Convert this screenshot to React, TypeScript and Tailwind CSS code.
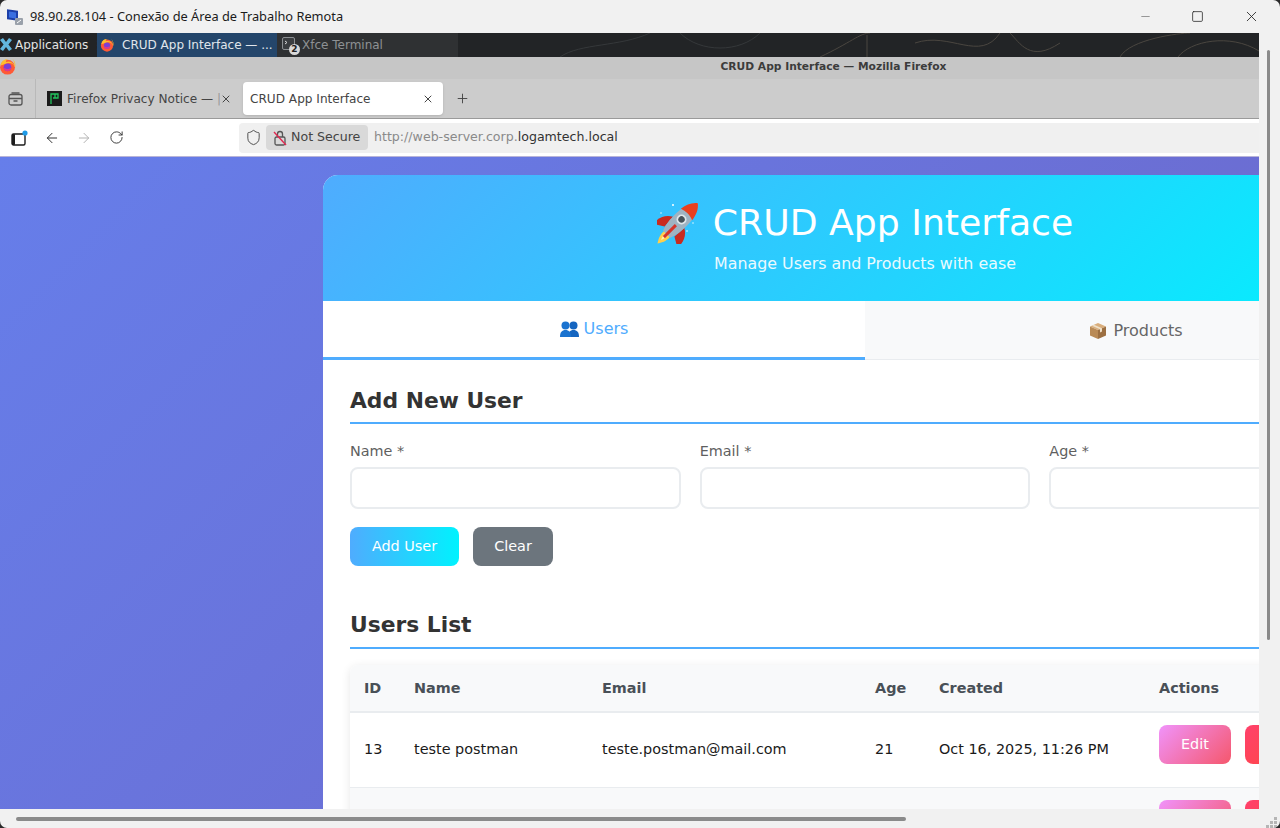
import { ArrowLeft, ArrowRight, Minus, Plus, RotateCw, Shield, Square, X } from "lucide-react";

const FirefoxLogo = ({ size = 16 }: { size?: number }) => (
  <svg width={size} height={size} viewBox="0 0 16 16" className="shrink-0">
    <circle cx="8" cy="8.6" r="7" fill="#ff5a36" />
    <path d="M1.5 7 C2 3 5 1 8 1.2 C6.8 2 6.4 3 6.6 3.8 C9 2.6 13 3.4 14.6 7.4 C15 5 14 2.4 12.4 .8 C15.4 3 16 6.6 15 9 C14.4 6 11 4 8 5 Z" fill="#ffbd2e" />
    <circle cx="8" cy="8.8" r="3.6" fill="#7b3fd6" />
    <path d="M4.4 8.8 A3.6 3.6 0 0 0 11.6 8.8 C10 11 6 11 4.4 8.8 Z" fill="#e0388c" />
  </svg>
);

const RemoteDesktopIcon = () => (
  <svg width="18" height="18" viewBox="0 0 18 18" className="shrink-0">
    <rect x="1" y="1" width="11" height="10" fill="#1c3fa8" transform="skewY(8)" />
    <rect x="3" y="3" width="7" height="6" fill="#3a6fe0" transform="skewY(8)" />
    <rect x="9" y="10" width="8" height="7" rx="1" fill="#9aa1aa" />
    <path d="M11 15 L15 12" stroke="#fff" strokeWidth="1" />
  </svg>
);

const XfceIcon = () => (
  <svg width="12" height="13" viewBox="0 0 12 13" className="shrink-0">
    <path d="M0 2 L3 0 L6 4 L9 0 L12 2 L8.4 6.5 L12 11 L9 13 L6 9 L3 13 L0 11 L3.6 6.5 Z" fill="#62b6dd" />
  </svg>
);

const TerminalIcon = () => (
  <div className="relative w-[16px] h-[16px] shrink-0">
    <svg width="13" height="13" viewBox="0 0 13 13">
      <rect x=".5" y=".5" width="12" height="12" rx="1.5" fill="#3a3d40" stroke="#8b8f92" />
      <path d="M3 4 L5 5.5 L3 7" stroke="#d8d8d8" fill="none" />
    </svg>
    <span className="absolute right-[-2px] bottom-[-2px] w-[11px] h-[11px] rounded-full bg-[#d8d8d8] text-[#222] text-[9px] leading-[11px] text-center font-bold">
      2
    </span>
  </div>
);

const WindowsTabIcon = () => (
  <svg width="15" height="14" viewBox="0 0 15 14" className="shrink-0">
    <rect x="1" y="2.5" width="13" height="10.5" rx="2" fill="none" stroke="#555" strokeWidth="1.3" />
    <path d="M1 6.5 H14" stroke="#555" strokeWidth="1.3" />
    <path d="M3.5 1 H11.5" stroke="#555" strokeWidth="1.3" />
    <path d="M5.5 9 H9.5" stroke="#555" strokeWidth="1.3" />
  </svg>
);

const SidebarIcon = () => (
  <svg width="17" height="16" viewBox="0 0 17 16" className="shrink-0">
    <rect x="1" y="4" width="13" height="11" rx="1.5" fill="none" stroke="#1d1d1d" strokeWidth="1.4" />
    <rect x="1" y="4" width="3" height="11" rx="1" fill="#1d1d1d" />
    <circle cx="14" cy="3" r="2.6" fill="#1e9be8" />
  </svg>
);

const PrivacyFavicon = () => (
  <div className="w-[15px] h-[15px] bg-[#1b1b1b] shrink-0 flex items-center justify-center">
    <svg width="9" height="11" viewBox="0 0 9 11">
      <path d="M1 11 V1 H8 V5 H3 M5 1 V5" stroke="#22c55e" strokeWidth="1.3" fill="none" />
    </svg>
  </div>
);

const InsecureLock = () => (
  <svg width="14" height="16" viewBox="0 0 14 16" className="shrink-0">
    <rect x="2" y="7" width="10" height="8" rx="1.5" fill="none" stroke="#555" strokeWidth="1.3" />
    <path d="M4.5 7 V4 A2.5 2.5 0 0 1 9.5 4 V7" fill="none" stroke="#555" strokeWidth="1.3" />
    <path d="M1 2 L13 15" stroke="#e22850" strokeWidth="1.4" />
  </svg>
);

const RocketEmoji = () => (
  <svg width="43" height="42" viewBox="1 0 43 42" className="shrink-0">
    <circle cx="17" cy="3" r="1" fill="#fff" />
    <circle cx="5" cy="11" r=".7" fill="#fff" />
    <circle cx="37" cy="21" r=".7" fill="#fff" />
    <circle cx="31" cy="29" r=".8" fill="#fff" />
    <g transform="rotate(45 22 21)">
      <path d="M18 36 H26 C27 42 24 47 22 50 C20 47 17 42 18 36 Z" fill="#ffcf4a" />
      <path d="M20 36 H24 C24 40 23 43 22 45 C21 43 20 40 20 36 Z" fill="#fff3b0" />
      <path d="M14 20 C7 24 4 31 5 39 L15 33 Z" fill="#c92b20" />
      <path d="M30 20 C37 24 40 31 39 39 L29 33 Z" fill="#c92b20" />
      <path d="M22 -7 C29 0 31 12 30 22 C30 29 28 34 27 37 H17 C16 34 14 29 14 22 C13 12 15 0 22 -7 Z" fill="#9fb3c2" />
      <path d="M22 -7 C27 -3 29 2 30 9 C25 7 19 7 14 9 C15 2 17 -3 22 -7 Z" fill="#e8401f" />
      <path d="M20.5 24 H23.5 V41 H20.5 Z" fill="#d6342a" />
      <circle cx="22" cy="16" r="5" fill="#dfe6ea" />
      <circle cx="22" cy="16" r="3.2" fill="#47525a" />
    </g>
  </svg>
);

const PeopleEmoji = () => (
  <svg width="19" height="16" viewBox="0 0 19 16" className="shrink-0">
    <circle cx="13.5" cy="4.5" r="4" fill="#1565c0" />
    <path d="M8 16 C8 11 10 9 13.5 9 C17 9 19 11 19 16 Z" fill="#1565c0" />
    <circle cx="5.5" cy="4.5" r="4" fill="#1a73d0" />
    <path d="M0 16 C0 11 2 9 5.5 9 C9 9 11 11 11 16 Z" fill="#1a73d0" />
  </svg>
);

const PackageEmoji = () => (
  <svg width="18" height="18" viewBox="0 0 18 18" className="shrink-0">
    <path d="M9 1 L17 4.5 L9 8 L1 4.5 Z" fill="#d9ae7c" />
    <path d="M1 4.5 L9 8 V17 L1 13.5 Z" fill="#b98a55" />
    <path d="M17 4.5 L9 8 V17 L17 13.5 Z" fill="#9c6f41" />
    <path d="M5 2.8 L13 6.3 V9.5 L11 10.4 V7.2 L3 3.7 Z" fill="#efe0c8" />
  </svg>
);

const ResizeGrip = () => (
  <svg width="14" height="12" viewBox="0 0 14 12" fill="#b5b5b5">
    <rect x="10" y="0" width="3" height="3" />
    <rect x="6" y="4" width="3" height="3" />
    <rect x="10" y="4" width="3" height="3" />
    <rect x="2" y="8" width="3" height="3" />
    <rect x="6" y="8" width="3" height="3" />
    <rect x="10" y="8" width="3" height="3" />
  </svg>
);

const users = [
  { key: "row-13", id: "13", name: "teste postman", email: "teste.postman@mail.com", age: "21", created: "Oct 16, 2025, 11:26 PM" },
  { key: "row-next", id: "", name: "", email: "", age: "", created: "" },
];

const Field = ({ label }: { label: string }) => (
  <div>
    <label className="block mb-[5px] text-[14.4px] leading-[22px] text-[#5f5f5f]">{label}</label>
    <input className="block w-full h-[42px] rounded-[8px] border-2 border-[#e9ecef] bg-white" />
  </div>
);

const SectionTitle = ({ children }: { children: string }) => (
  <h2 className="text-[21.8px] leading-[27px] font-bold text-[#333] pb-[8px] border-b-2 border-[#4facfe]">
    {children}
  </h2>
);

export default function App() {
  return (
    <div className="w-[1280px] h-[828px] overflow-hidden bg-[#2a2a2a]">
      <div className="h-full flex flex-col rounded-[7px] overflow-hidden bg-[#f1f1f1]">
        {/* RDP title bar */}
        <div className="h-[33px] shrink-0 flex items-center pl-[6px] font-['Noto_Sans',sans-serif] text-[12.8px] text-[#1b1b1b]">
          <RemoteDesktopIcon />
          <span className="ml-[6px]">98.90.28.104 - Conexão de Área de Trabalho Remota</span>
          <div className="ml-auto flex items-center text-[#222]">
            <Minus size={13} strokeWidth={1.2} className="mr-[39px] text-[#666]" />
            <Square size={13} strokeWidth={1.4} className="mr-[39px]" />
            <X size={17} strokeWidth={1.2} className="mr-[20px]" />
          </div>
        </div>

        <div className="flex-1 min-h-0 flex">
          <div className="w-[1259px] shrink-0 overflow-hidden flex flex-col font-['DejaVu_Sans',sans-serif]">
            {/* XFCE panel */}
            <div className="h-[24px] shrink-0 bg-[#222426] flex items-center text-[12px] overflow-hidden relative">
              <svg width="1259" height="24" className="absolute left-0 top-0" fill="none" stroke="#4a4640" strokeWidth="1">
                <path d="M820 24 C850 10 860 0 870 0 M867 24 V2 M915 10 C950 -2 980 30 1000 0 M1010 0 C1020 10 1030 30 1060 10 M1120 24 C1130 6 1180 0 1190 0 M1178 24 C1190 8 1230 0 1259 18" />
                <path d="M560 24 C580 10 620 14 650 0 M680 0 C700 20 740 20 760 0" stroke="#35383a" />
              </svg>
              <div className="relative flex items-center h-full pb-[1px]">
                <XfceIcon />
                <span className="ml-[3px] text-[#e4e4e4] w-[82px] whitespace-nowrap">
                  Applications <span className="text-[#999]">⋮</span>
                </span>
                <div className="w-[180px] h-[24px] bg-[#24466b] flex items-center pl-[3px] text-[#e0e6ec]">
                  <FirefoxLogo size={14} />
                  <span className="ml-[8px] whitespace-nowrap">CRUD App Interface — ...</span>
                </div>
                <div className="w-[181px] h-[24px] bg-[#2f3133] flex items-center pl-[5px] text-[#8e9194]">
                  <TerminalIcon />
                  <span className="ml-[4px]">Xfce Terminal</span>
                </div>
              </div>
            </div>

            {/* Firefox title bar */}
            <div className="h-[22px] shrink-0 bg-[#c6c6c6] flex items-center relative">
              <div className="ml-[-1px] mb-[3px]">
                <FirefoxLogo size={17} />
              </div>
              <span className="w-full text-center font-bold text-[10.7px] leading-[20px] pb-[2px] text-[#3c3c3c] pl-[392px]">
                CRUD App Interface — Mozilla Firefox
              </span>
            </div>

            {/* Tab strip */}
            <div className="h-[40px] shrink-0 bg-[#cccccc] border-b border-[#9a9a9a] flex items-center text-[12.1px] text-[#444]">
              <div className="w-[36px] h-full flex items-center pl-[8px] border-r border-[#b9b9b9]">
                <WindowsTabIcon />
              </div>
              <div className="w-[207px] flex items-center pl-[11px] whitespace-nowrap pt-[1px]">
                <PrivacyFavicon />
                <span className="ml-[5px] w-[153px] overflow-hidden">
                  Firefox Privacy Notice — <span className="text-[#999]">|</span>
                </span>
                <X size={12} strokeWidth={2} />
              </div>
              <div className="w-[200px] h-[33px] bg-white rounded-[4px] shadow-sm flex items-center pl-[7px] pr-[9px]">
                <span className="pt-[1px]">CRUD App Interface</span>
                <X size={12} strokeWidth={2} className="ml-auto" />
              </div>
              <Plus size={15} strokeWidth={1.5} className="ml-[12px]" />
            </div>

            {/* Nav bar */}
            <div className="h-[37px] shrink-0 bg-white flex items-center text-[12.6px]">
              <div className="w-[239px] flex items-center pl-[11px] text-[#333]">
                <SidebarIcon />
                <ArrowLeft size={16} strokeWidth={1.5} className="ml-[16px]" />
                <ArrowRight size={16} strokeWidth={1.5} className="ml-[16px] text-[#b3b3b3]" />
                <RotateCw size={15} strokeWidth={1.5} className="ml-[17px]" />
              </div>
              <div className="flex-1 h-[30px] bg-[#f0f0f0] rounded-l-[4px] flex items-center pl-[6px]">
                <Shield size={17} strokeWidth={1.3} className="text-[#444]" />
                <div className="ml-[4px] h-[25px] w-[102px] bg-[#d9d9d9] rounded-[4px] flex items-center pl-[7px] text-[#444] whitespace-nowrap">
                  <InsecureLock />
                  <span className="ml-[4px]">Not Secure</span>
                </div>
                <span className="ml-[6px] text-[#8a8a8a]">
                  http://web-server.corp.<span className="text-[#333]">logamtech.local</span>
                </span>
              </div>
            </div>

            {/* Page */}
            <div className="flex-1 min-h-0 overflow-hidden border-t border-[#b8b4d8] bg-[linear-gradient(135deg,#667eea_0%,#764ba2_100%)] bg-[length:2560px_1400px] pt-[18px] pl-[323px]">
              <div className="w-[1084px] rounded-t-[15px] bg-white overflow-hidden">
                <header className="h-[126px] bg-[linear-gradient(135deg,#4facfe_0%,#00f2fe_100%)] text-white text-center pt-[26px]">
                  <h1 className="flex items-center justify-center gap-[13px] text-[36.2px] leading-[44px]">
                    <RocketEmoji />
                    <span>CRUD App Interface</span>
                  </h1>
                  <p className="mt-[9px] text-[15.85px] leading-[20px] opacity-90">Manage Users and Products with ease</p>
                </header>

                <div className="h-[59px] flex text-[16px]">
                  <button className="w-1/2 flex items-center justify-center gap-[5px] border-b-[3px] border-[#4facfe] text-[#4facfe] bg-white">
                    <PeopleEmoji />
                    Users
                  </button>
                  <button className="w-1/2 flex items-center justify-center gap-[6px] border-b border-[#e9ecef] bg-[#f8f9fa] text-[#666] pt-[2px]">
                    <PackageEmoji />
                    Products
                  </button>
                </div>

                <div className="px-[27px] pt-[27px]">
                  <SectionTitle>Add New User</SectionTitle>
                  <div className="mt-[16px] grid grid-cols-3 gap-[19px]">
                    <Field label="Name *" />
                    <Field label="Email *" />
                    <Field label="Age *" />
                  </div>
                  <div className="mt-[18px] flex gap-[14px] text-[14.4px] text-white">
                    <button className="w-[109px] h-[39px] rounded-[8px] bg-[linear-gradient(90deg,#4facfe_0%,#00f2fe_100%)]">
                      Add User
                    </button>
                    <button className="w-[80px] h-[39px] rounded-[8px] bg-[#6c757d]">Clear</button>
                  </div>

                  <div className="mt-[45px]">
                    <h2 className="text-[21.8px] leading-[27px] font-bold text-[#333] pb-[9px] border-b-2 border-[#4facfe]">
                      Users List
                    </h2>
                  </div>

                  <div className="mt-[16px] rounded-t-[8px] shadow-[0_2px_10px_rgba(0,0,0,0.1)] overflow-hidden">
                    <table className="w-full table-fixed border-collapse text-left text-[14.4px]">
                      <colgroup>
                        <col className="w-[50px]" />
                        <col className="w-[188px]" />
                        <col className="w-[273px]" />
                        <col className="w-[64px]" />
                        <col className="w-[220px]" />
                        <col />
                      </colgroup>
                      <thead>
                        <tr className="h-[47px] bg-[#f8f9fa] border-b-2 border-[#e9ecef] text-[#495057]">
                          {["ID", "Name", "Email", "Age", "Created", "Actions"].map((h) => (
                            <th key={h} className="px-[14px] font-bold pt-[1px]">
                              {h}
                            </th>
                          ))}
                        </tr>
                      </thead>
                      <tbody className="text-[#1a1a1a]">
                        {users.map((u, i) => (
                          <tr key={u.key} className={`h-[75px] border-b border-[#e9ecef] ${i === 1 ? "bg-[#f8f9fa]" : "bg-white"}`}>
                            <td className="px-[14px]">{u.id}</td>
                            <td className="px-[14px]">{u.name}</td>
                            <td className="px-[14px] whitespace-nowrap">{u.email}</td>
                            <td className="px-[14px]">{u.age}</td>
                            <td className="px-[14px] whitespace-nowrap">{u.created}</td>
                            <td className="px-[14px] align-top pt-[12px]">
                              <div className="flex gap-[14px] text-white">
                                <button className="px-[22px] h-[39px] shrink-0 rounded-[8px] bg-[linear-gradient(135deg,#f093fb_0%,#f5576c_100%)]">
                                  Edit
                                </button>
                                <button className="px-[22px] h-[39px] shrink-0 rounded-[8px] bg-[linear-gradient(135deg,#ff416c_0%,#ff4b2b_100%)]">
                                  Delete
                                </button>
                              </div>
                            </td>
                          </tr>
                        ))}
                      </tbody>
                    </table>
                  </div>
                </div>
              </div>
            </div>
          </div>

          {/* RDP vertical scrollbar */}
          <div className="flex-1 pt-[17px] pl-[8px]">
            <div className="w-[3px] h-[590px] bg-[#8a8a8a] rounded-full" />
          </div>
        </div>

        {/* RDP horizontal scrollbar */}
        <div className="h-[19px] shrink-0 pt-[8px] pl-[16px] pr-[2px] flex items-start justify-between">
          <div className="w-[890px] h-[4px] bg-[#8a8a8a] rounded-full" />
          <ResizeGrip />
        </div>
      </div>
    </div>
  );
}
